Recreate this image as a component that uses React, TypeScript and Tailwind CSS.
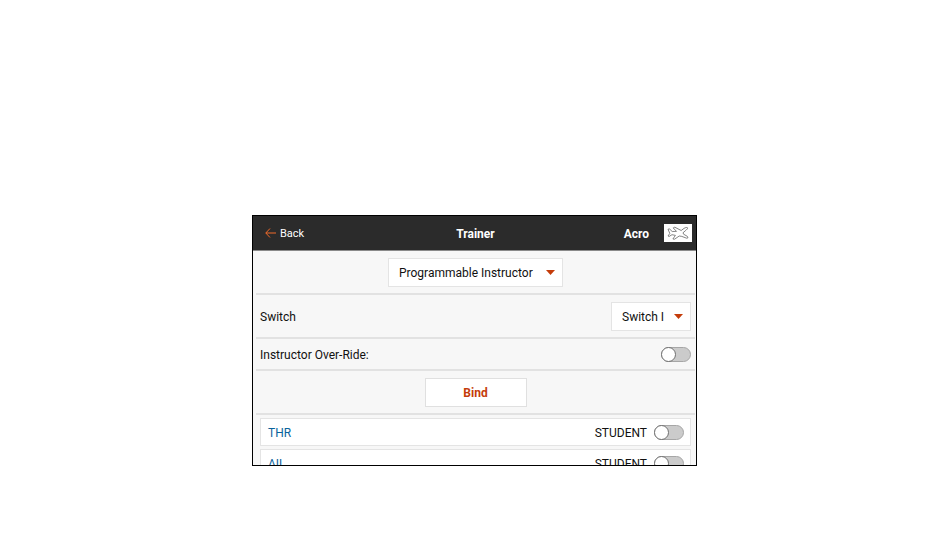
import { useState } from "react";
import { clsx } from "clsx";

interface ToggleProps {
  id: string;
  checked: boolean;
  onChange: (checked: boolean) => void;
}

function Toggle({ id, checked, onChange }: ToggleProps) {
  return (
    <input
      id={id}
      type="checkbox"
      role="switch"
      checked={checked}
      onChange={(e) => onChange(e.target.checked)}
      className={clsx(
        "flex h-[15px] w-[30px] shrink-0 appearance-none rounded-full border border-[#a6a6a6] bg-[#cbcbcb]",
        "before:-my-px before:-ml-px before:size-[15px] before:rounded-full before:border before:border-[#6f6f6f] before:bg-white",
        checked && "justify-end"
      )}
    />
  );
}

interface DropdownProps {
  label: string;
  options: string[];
  className?: string;
}

function Dropdown({ label, options, className }: DropdownProps) {
  return (
    <div className="relative flex">
      <select
        aria-label={label}
        className={clsx(
          "h-[29px] appearance-none border border-[#e4e4e4] bg-white pt-0.5 pl-2.5 text-[12px] text-[#111]",
          className
        )}
      >
        {options.map((o) => (
          <option key={o}>{o}</option>
        ))}
      </select>
      <svg
        viewBox="0 0 9 5"
        className="pointer-events-none absolute top-3 right-2 h-[5px] w-[9px] fill-[#c43c0a]"
      >
        <path d="M0 0h9L4.5 5z" />
      </svg>
    </div>
  );
}

function PlaneIcon() {
  return (
    <svg
      viewBox="0 0 28 18"
      className="h-[18px] w-7 bg-white"
      fill="none"
      stroke="#666"
      strokeWidth="0.8"
      strokeLinejoin="round"
    >
      <path d="M4 5.2 5.6 5 8.200 7.500 12.500 7.400 9.200 3.900 10.800 3.200 17.200 6.500 20 4.400C21.500 3.400 23.200 3.200 23.600 3.800 23.900 4.500 22.600 5.800 21.200 6.900L19 8.800 19.600 10.200 23.400 12.400 24 13.800 22.600 14.200 17.800 12.400 15.200 12 10.600 15.200 8.900 15 11.400 11.400 8 10.700 5.200 12.400 4 12 5.800 9.400Z" />
    </svg>
  );
}

const CHANNELS = ["THR", "AIL"];

export default function App() {
  const [override, setOverride] = useState(false);
  const [student, setStudent] = useState<Record<string, boolean>>({});

  return (
    <main className="flex min-h-screen items-start justify-center bg-white pt-[215px] pr-px font-['Roboto',sans-serif] text-[12px] leading-4 text-[#111]">
      <section className="max-h-[251px] w-full max-w-[445px] overflow-hidden border border-black bg-[#f7f7f7]">
        <header className="grid h-[35px] grid-cols-3 items-center border-b border-[#8a8a8a] bg-[#2b2b2b] pr-1 pl-1.5 text-white">
          <button className="flex items-center gap-1 justify-self-start pl-1.5 text-[11px]">
            <svg
              viewBox="0 0 11 10"
              className="h-2.5 w-[11px]"
              fill="none"
              stroke="#f06a2a"
              strokeWidth="1"
            >
              <path d="M5 .5.8 5 5 9.5M.8 5H11" />
            </svg>
            <span className="pt-0.5">Back</span>
          </button>
          <h1 className="pt-0.5 text-center font-bold">Trainer</h1>
          <div className="flex items-center justify-end gap-[15px] font-bold">
            <span className="pt-0.5">Acro</span>
            <PlaneIcon />
          </div>
        </header>

        <div className="pr-px pl-[3px]">
          <div className="flex h-11 items-center justify-center border-b-2 border-[#e2e2e2]">
            <Dropdown
              label="Trainer mode"
              options={["Programmable Instructor"]}
              className="w-[175px]"
            />
          </div>

          <div className="flex h-11 items-center justify-between border-b-2 border-[#e2e2e2] px-1">
            <span className="pt-0.5">Switch</span>
            <Dropdown label="Switch" options={["Switch I"]} className="w-20" />
          </div>

          <div className="flex h-8 items-center justify-between border-b-2 border-[#e2e2e2] px-1">
            <label htmlFor="override" className="pt-0.5">
              Instructor Over-Ride:
            </label>
            <Toggle id="override" checked={override} onChange={setOverride} />
          </div>

          <div className="flex h-11 items-center justify-center border-b-2 border-[#e2e2e2]">
            <button className="h-[29px] w-[102px] border border-[#e0e0e0] bg-white pt-0.5 font-bold text-[#c43c0a]">
              Bind
            </button>
          </div>

          <ul className="flex flex-col gap-[3px] px-1 pt-[3px]">
            {CHANNELS.map((ch) => (
              <li
                key={ch}
                className="flex h-7 items-center justify-between border border-[#e4e4e4] bg-white pr-1.5 pl-[7px]"
              >
                <span className="pt-0.5 text-[#0a639c]">{ch}</span>
                <div className="flex items-center gap-[7px]">
                  <label htmlFor={ch} className="pt-0.5">
                    STUDENT
                  </label>
                  <Toggle
                    id={ch}
                    checked={!!student[ch]}
                    onChange={(v) => setStudent({ ...student, [ch]: v })}
                  />
                </div>
              </li>
            ))}
          </ul>
        </div>
      </section>
    </main>
  );
}
